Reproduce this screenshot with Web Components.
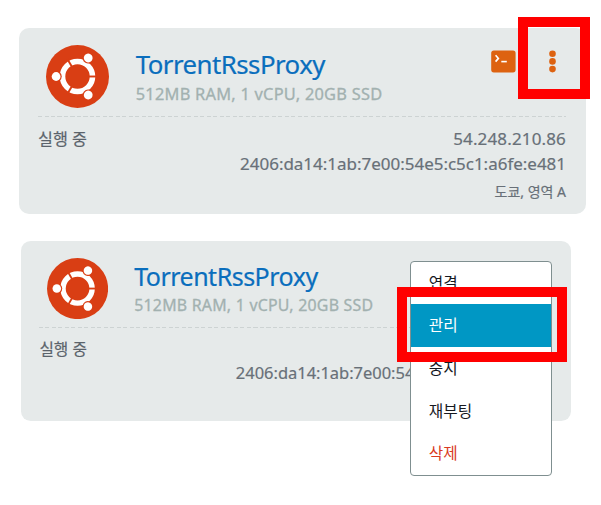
<!DOCTYPE html>
<html lang="ko">
<head>
<meta charset="utf-8">
<title>Instances</title>
<style>
  body {
    margin: 0;
    background: #fff;
    font-family: 'Noto Sans', 'Noto Sans CJK KR', sans-serif;
  }
</style>
</head>
<body>
<instance-board>
  <instance-card class="large">
    <span slot="name">TorrentRssProxy</span>
    <span slot="plan">512MB RAM, 1 vCPU, 20GB SSD</span>
    <card-actions slot="actions"></card-actions>
    <span slot="status">실행 중</span>
    <span slot="ipv4">54.248.210.86</span>
    <span slot="ipv6">2406:da14:1ab:7e00:54e5:c5c1:a6fe:e481</span>
    <span slot="region">도쿄, 영역 A</span>
  </instance-card>
  <instance-card class="small">
    <span slot="name">TorrentRssProxy</span>
    <span slot="plan">512MB RAM, 1 vCPU, 20GB SSD</span>
    <span slot="status">실행 중</span>
    <span slot="ipv6">2406:da14:1ab:7e00:54</span>
  </instance-card>
  <action-menu slot="overlay">
    <menu-entry>연결</menu-entry>
    <menu-entry active>관리</menu-entry>
    <menu-entry>중지</menu-entry>
    <menu-entry>재부팅</menu-entry>
    <menu-entry danger>삭제</menu-entry>
  </action-menu>
  <highlight-box slot="overlay" style="left: 518px; top: 17px; width: 72px; height: 82px"></highlight-box>
  <highlight-box slot="overlay" style="left: 397px; top: 287px; width: 170px; height: 75px"></highlight-box>
</instance-board>

<script>
class InstanceBoard extends HTMLElement {
  constructor() {
    super();
    this.attachShadow({ mode: 'open' }).innerHTML = `
      <style>
        :host {
          display: block;
          position: relative;
          box-sizing: border-box;
          width: 601px;
          height: 505px;
          padding: 27.5px 15px 0 19px;
          overflow: hidden;
        }
        .cards {
          display: flex;
          flex-direction: column;
          gap: 27.5px;
        }
        ::slotted(instance-card.small) {
          --u: 0.97px;
          --address-align: left;
          margin-left: 2px;
        }
      </style>
      <div class="cards"><slot></slot></div>
      <slot name="overlay"></slot>
    `;
  }
}

class UbuntuLogo extends HTMLElement {
  constructor() {
    super();
    this.attachShadow({ mode: 'open' }).innerHTML = `
      <style>
        :host { display: block; }
        svg { display: block; width: 100%; height: 100%; }
      </style>
      <svg viewBox="-31.5 -31.5 63 63">
        <circle r="31.5" fill="#d93e14"/>
        <circle r="15" fill="none" stroke="#fff" stroke-width="5.6"/>
        <g id="arm">
          <path d="M10 0H20" stroke="#d93e14" stroke-width="1.9"/>
          <circle cx="-21.4" r="5.6" fill="#d93e14"/>
          <circle cx="-21.4" r="4.4" fill="#fff"/>
        </g>
        <use href="#arm" transform="rotate(120)"/>
        <use href="#arm" transform="rotate(240)"/>
      </svg>
    `;
  }
}

class CardActions extends HTMLElement {
  constructor() {
    super();
    this.attachShadow({ mode: 'open' }).innerHTML = `
      <style>
        :host {
          display: flex;
          align-items: center;
          gap: 33px;
          color: #dd6210;
        }
        svg { display: block; }
      </style>
      <svg width="25" height="23" viewBox="0 0 25 23">
        <rect x=".2" y=".4" width="24.4" height="22" rx="2.6" fill="currentColor"/>
        <path d="M4.6 5.2L7.4 8.4L4.6 11.6" fill="none" stroke="#fff" stroke-width="1.6"/>
        <path d="M10.3 11.6H15.8" stroke="#fff" stroke-width="1.6"/>
      </svg>
      <svg width="7" height="23" viewBox="0 0 7 23" fill="currentColor">
        <circle cx="3.5" cy="3.7" r="3.3"/>
        <circle cx="3.5" cy="11.4" r="3.3"/>
        <circle cx="3.5" cy="19.1" r="3.3"/>
      </svg>
    `;
  }
}

class InstanceCard extends HTMLElement {
  constructor() {
    super();
    this.attachShadow({ mode: 'open' }).innerHTML = `
      <style>
        :host {
          --u: 1px;
          display: block;
          box-sizing: border-box;
          width: calc(567 * var(--u));
          height: calc(186 * var(--u));
          padding: 0 calc(20 * var(--u)) 0 calc(19 * var(--u));
          border-radius: calc(10 * var(--u));
          background: #e6eaea;
          color: #687078;
          white-space: nowrap;
          -webkit-text-stroke: 0.2px currentColor;
        }
        header {
          display: flex;
          align-items: flex-start;
          height: calc(88.2 * var(--u));
        }
        ubuntu-logo {
          width: calc(63 * var(--u));
          height: calc(63 * var(--u));
          margin: calc(17.3 * var(--u)) calc(26.7 * var(--u)) 0 calc(8 * var(--u));
        }
        .heading {
          flex: 1;
          padding-top: calc(19.6 * var(--u));
        }
        .name {
          color: #0a6ebd;
          font-size: calc(25.8 * var(--u));
          line-height: calc(34 * var(--u));
          letter-spacing: calc(-0.53 * var(--u));
          -webkit-text-stroke-width: 0.2px;
        }
        .plan {
          padding-top: calc(0.9 * var(--u));
          color: #a2b1b0;
          font-size: calc(16.4 * var(--u));
          line-height: calc(24 * var(--u));
          letter-spacing: calc(0.24 * var(--u));
          -webkit-text-stroke-width: 0.3px;
        }
        .actions {
          padding: 22.5px 10.5px 0 0;
        }
        .rule {
          height: 1px;
          background: repeating-linear-gradient(90deg, #cdd3d3 0 4px, transparent 4px 6.5px);
        }
        .body {
          display: flex;
          justify-content: space-between;
          padding-top: calc(10.5 * var(--u));
          font-size: calc(17 * var(--u));
          line-height: calc(24.5 * var(--u));
        }
        .status {
          color: #5b636b;
          font-size: calc(16.2 * var(--u));
        }
        .address {
          min-width: calc(325.5 * var(--u));
          text-align: var(--address-align, right);
        }
        .address div { min-height: calc(24.5 * var(--u)); }
        .address .ipv4 { letter-spacing: calc(0.15 * var(--u)); }
        .address .ipv6 { letter-spacing: calc(-0.02 * var(--u)); }
        .address .region {
          padding-top: calc(4.2 * var(--u));
          font-size: calc(14 * var(--u));
        }
      </style>
      <header>
        <ubuntu-logo></ubuntu-logo>
        <div class="heading">
          <div class="name"><slot name="name"></slot></div>
          <div class="plan"><slot name="plan"></slot></div>
        </div>
        <div class="actions"><slot name="actions"></slot></div>
      </header>
      <div class="rule"></div>
      <div class="body">
        <div class="status"><slot name="status"></slot></div>
        <div class="address">
          <div class="ipv4"><slot name="ipv4"></slot></div>
          <div class="ipv6"><slot name="ipv6"></slot></div>
          <div class="region"><slot name="region"></slot></div>
        </div>
      </div>
    `;
  }
}

class ActionMenu extends HTMLElement {
  constructor() {
    super();
    this.attachShadow({ mode: 'open' }).innerHTML = `
      <style>
        :host {
          position: absolute;
          left: 409.5px;
          top: 260.5px;
          box-sizing: border-box;
          width: 142px;
          height: 215px;
          display: flex;
          flex-direction: column;
          border: 1px solid #7f8f90;
          border-radius: 4px;
          background: #fff;
        }
      </style>
      <slot></slot>
    `;
  }
}

class MenuEntry extends HTMLElement {
  constructor() {
    super();
    this.attachShadow({ mode: 'open' }).innerHTML = `
      <style>
        :host {
          flex: 1;
          display: flex;
          align-items: center;
          padding-left: 18.3px;
          color: #16191f;
          font-size: 15.7px;
          line-height: 24px;
        }
        :host([active]) {
          background: #0097c4;
          color: #fff;
        }
        :host([danger]) { color: #d93a22; }
      </style>
      <slot></slot>
    `;
  }
}

class HighlightBox extends HTMLElement {
  constructor() {
    super();
    this.attachShadow({ mode: 'open' }).innerHTML = `
      <style>
        :host {
          position: absolute;
          box-sizing: border-box;
          border: 10px solid #f00;
        }
      </style>
    `;
  }
}

customElements.define('ubuntu-logo', UbuntuLogo);
customElements.define('card-actions', CardActions);
customElements.define('instance-card', InstanceCard);
customElements.define('menu-entry', MenuEntry);
customElements.define('action-menu', ActionMenu);
customElements.define('highlight-box', HighlightBox);
customElements.define('instance-board', InstanceBoard);
</script>
</body>
</html>
